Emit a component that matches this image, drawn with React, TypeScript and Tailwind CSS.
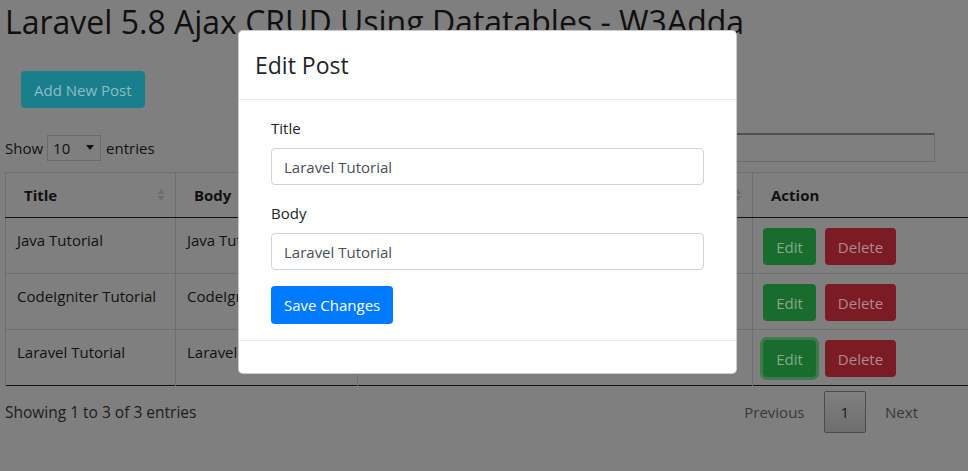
import React from 'react'

const rows = [
  { title: 'Java Tutorial', body: 'Java Tutorial', date: '2019-05-10 10:21:04' },
  { title: 'CodeIgniter Tutorial', body: 'CodeIgniter Tutorial', date: '2019-05-10 10:21:31' },
  { title: 'Laravel Tutorial', body: 'Laravel Tutorial', date: '2019-05-10 10:21:52' },
]

const SortIcon = () => (
  <svg width="8" height="14" viewBox="0 0 8 14" className="shrink-0">
    <path d="M4 1 L7.5 6 L0.5 6 Z" fill="#6d6d6d" />
    <path d="M4 13 L7.5 8 L0.5 8 Z" fill="#6d6d6d" />
  </svg>
)

const App: React.FC = () => {
  return (
    <div className="relative w-[968px] h-[471px] overflow-hidden bg-[#7f7f7f] font-['Open_Sans',sans-serif] text-[#111] text-[15px] leading-[24px]">
      {/* page under the backdrop */}
      <div className="pl-[5px]">
        <h1 className="text-[32px] leading-[44px] font-normal text-[#101010] whitespace-nowrap">
          Laravel 5.8 Ajax CRUD Using Datatables - W3Adda
        </h1>

        <div className="mt-[27px] pl-[16px]">
          <button className="h-[37px] px-[13px] rounded-[4px] bg-[#1a7f8c] text-[#8dbcc3]">
            Add New Post
          </button>
        </div>

        <div className="mt-[25px] w-[930px] flex items-center justify-between">
          <div className="flex items-center">
            <span>Show</span>
            <div className="ml-[4px] w-[54px] h-[26px] border border-[#6b6b6b] flex items-center justify-between pl-[5px] pr-[6px]">
              <span>10</span>
              <svg width="8" height="5" viewBox="0 0 8 5">
                <path d="M0 0 L8 0 L4 5 Z" fill="#111" />
              </svg>
            </div>
            <span className="ml-[5px]">entries</span>
          </div>
          <div className="flex items-center">
            <span className="mr-[6px]">Search:</span>
            <div className="w-[200px] h-[29px] border border-[#6b6b6b] border-t-[#505050] border-t-2" />
          </div>
        </div>

        <table className="mt-[10px] w-[1000px] table-fixed border-collapse">
          <colgroup>
            <col className="w-[170px]" />
            <col className="w-[182px]" />
            <col className="w-[395px]" />
            <col />
          </colgroup>
          <thead>
            <tr className="border-t border-[#6f6f6f]">
              {['Title', 'Body', 'Created At'].map(h => (
                <th key={h} className="border-x border-[#6f6f6f] border-b border-b-[#111] pl-[18px] pr-[10px] pt-[10px] pb-[10px] text-left font-bold">
                  <div className="flex items-center justify-between">
                    <span>{h}</span>
                    <SortIcon />
                  </div>
                </th>
              ))}
              <th className="border-x border-[#6f6f6f] border-b border-b-[#111] px-[18px] pt-[10px] pb-[10px] text-left font-bold">
                Action
              </th>
            </tr>
          </thead>
          <tbody>
            {rows.map((r, i) => (
              <tr key={r.title} className={i === rows.length - 1 ? 'border-b border-[#111]' : 'border-b border-[#6f6f6f]'}>
                <td className="align-top border-x border-[#6f6f6f] px-[11px] pt-[10px] pb-[8px] whitespace-nowrap">{r.title}</td>
                <td className="align-top border-x border-[#6f6f6f] px-[11px] pt-[10px] pb-[8px] whitespace-nowrap">{r.body}</td>
                <td className="align-top border-x border-[#6f6f6f] px-[11px] pt-[10px] pb-[8px] whitespace-nowrap">{r.date}</td>
                <td className="align-top border-x border-[#6f6f6f] px-[10px] pt-[10px] pb-[8px]">
                  <div className="flex items-center gap-[9px]">
                    <button
                      className={`h-[37px] w-[53px] rounded-[4px] bg-[#186c2e] text-[#86a88e] ${
                        i === 2 ? 'shadow-[0_0_0_3px_#3f7a4d]' : ''
                      }`}
                    >
                      Edit
                    </button>
                    <button className="h-[37px] w-[71px] rounded-[4px] bg-[#7b1b23] text-[#b08a8e]">
                      Delete
                    </button>
                  </div>
                </td>
              </tr>
            ))}
          </tbody>
        </table>

        <div className="mt-[5px] w-[930px] flex items-center justify-between">
          <span className="text-[15.5px] text-[#1c1c1c]">Showing 1 to 3 of 3 entries</span>
          <div className="flex items-center text-[#383838]">
            <span className="block px-[16px] py-[8px] border border-transparent">Previous</span>
            <span className="block ml-[2px] px-[16px] py-[8px] border border-[#4b4b4b] rounded-[2px] bg-gradient-to-b from-[#808080] to-[#6e6e6e] text-[#1a1a1a]">
              1
            </span>
            <span className="block ml-[2px] px-[16px] py-[8px] border border-transparent">Next</span>
          </div>
        </div>
      </div>

      {/* modal */}
      <div className="absolute left-[238px] top-[30px] w-[499px] bg-white rounded-[5px] border border-black/20 text-[#212529]">
        <div className="px-[16px] py-[16px] border-b border-[#e9ecef]">
          <h4 className="text-[23px] leading-[36px] font-normal">Edit Post</h4>
        </div>
        <div className="p-[16px]">
          <div className="px-[16px]">
            <div className="mb-[16px]">
              <label className="block mb-[8px]">Title</label>
              <input
                readOnly
                value="Laravel Tutorial"
                className="w-full h-[37px] px-[12px] border border-[#ced4da] rounded-[4px] text-[#495057] outline-none"
              />
            </div>
            <div className="mb-[16px]">
              <label className="block mb-[8px]">Body</label>
              <input
                readOnly
                value="Laravel Tutorial"
                className="w-full h-[37px] px-[12px] border border-[#ced4da] rounded-[4px] text-[#495057] outline-none"
              />
            </div>
            <button className="h-[38px] px-[13px] rounded-[4px] bg-[#007bff] text-white">
              Save Changes
            </button>
          </div>
        </div>
        <div className="h-[33px] border-t border-[#e9ecef]" />
      </div>
    </div>
  )
}

export default App
